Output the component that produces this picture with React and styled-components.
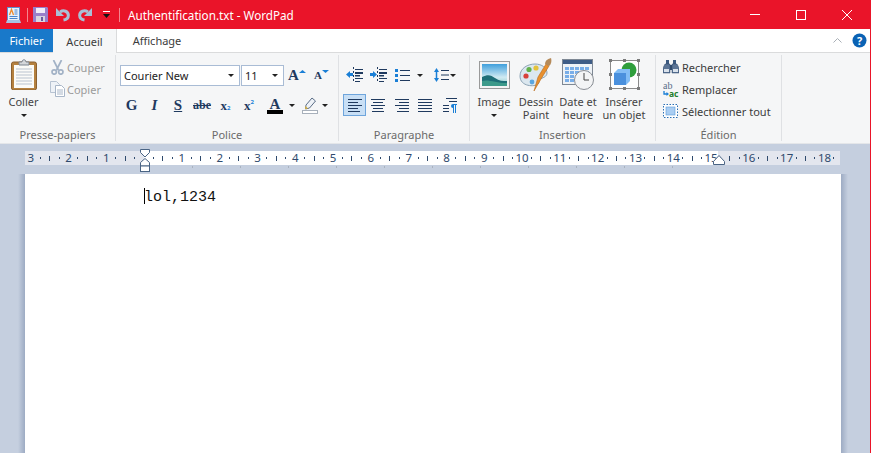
import styled, { createGlobalStyle } from "styled-components";

const Global = createGlobalStyle`
  html, body { margin: 0; padding: 0; height: 100%; overflow: hidden; }
  body { font-family: "Noto Sans", "Open Sans", sans-serif; font-size: 11px; color: #3c3c3c; }
  #root { height: 100%; }
`;

const Window = styled.div`
  width: 871px;
  height: 453px;
  box-sizing: border-box;
  border-right: 1px solid #ea1429;
  display: flex;
  flex-direction: column;
  overflow: hidden;
  background: #c5cfdf;
`;

const TitleBar = styled.div`
  height: 29px;
  flex: none;
  background: #ea1429;
  display: flex;
  align-items: center;
  color: #fff;
`;

const QuickBtn = styled.div`
  width: ${(p) => p.$w}px;
  height: 29px;
  display: flex;
  align-items: center;
  justify-content: center;
  flex: none;
`;

const TitleSep = styled.div`
  width: 1px;
  height: 14px;
  background: #f4848f;
  flex: none;
`;

const TitleText = styled.div`
  margin-left: 8px;
  font-size: 11.7px;
  flex: 1;
`;

const WinBtn = styled.div`
  width: 46px;
  height: 29px;
  display: flex;
  align-items: center;
  justify-content: center;
`;

const TabRow = styled.div`
  height: 24px;
  flex: none;
  background: #fff;
  display: flex;
  align-items: stretch;
  box-sizing: border-box;
  border-bottom: 1px solid #dadbdc;
  padding-right: 3px;
`;

const FileTab = styled.div`
  width: 53px;
  background: #1979ca;
  color: #fff;
  display: flex;
  align-items: center;
  justify-content: center;
`;

const Tab = styled.div`
  width: ${(p) => p.$w}px;
  display: flex;
  align-items: center;
  justify-content: center;
  color: #3c3c3c;
  box-sizing: border-box;
  height: ${(p) => (p.$active ? "24px" : "23px")};
  background: ${(p) => (p.$active ? "#f5f6f7" : "#fff")};
  border-right: ${(p) => (p.$active ? "1px solid #dadbdc" : "none")};
`;

const TabFill = styled.div`
  flex: 1;
`;

const TabIcon = styled.div`
  display: flex;
  align-items: center;
  margin-left: ${(p) => p.$ml || 0}px;
`;

const Ribbon = styled.div`
  height: 91px;
  flex: none;
  background: #f5f6f7;
  display: flex;
  box-sizing: border-box;
  padding-top: 2px;
  border-bottom: 1px solid #e4e6e9;
`;

const Group = styled.div`
  width: ${(p) => p.$w}px;
  height: 86px;
  box-sizing: border-box;
  border-right: 1px solid #dfe1e4;
  display: flex;
  flex-direction: column;
  flex: none;
`;

const GroupBody = styled.div`
  flex: 1;
  display: flex;
  padding-left: ${(p) => p.$pl || 0}px;
  padding-top: ${(p) => p.$pt || 0}px;
  min-height: 0;
`;

const GroupBodyCol = styled(GroupBody)`
  flex-direction: column;
`;

const GroupLabel = styled.div`
  height: 12px;
  line-height: 12px;
  text-align: center;
  color: #6a6a6a;
  flex: none;
`;

const LargeBtn = styled.div`
  width: ${(p) => p.$w}px;
  display: flex;
  flex-direction: column;
  align-items: center;
  flex: none;
  padding-top: 1px;
`;

const LargeIcon = styled.div`
  height: 35px;
  display: flex;
  align-items: center;
  justify-content: center;
  margin-bottom: 3px;
`;

const LargeLabel = styled.div`
  line-height: 13px;
  text-align: center;
  white-space: nowrap;
  color: #444;
`;

const SmallCol = styled.div`
  display: flex;
  flex-direction: column;
`;

const SmallBtn = styled.div`
  height: 22px;
  display: flex;
  align-items: center;
  white-space: nowrap;
  color: ${(p) => (p.$disabled ? "#9b9b9b" : "#3c3c3c")};
`;

const SmallIcon = styled.div`
  width: ${(p) => p.$w || 19}px;
  display: flex;
  align-items: center;
  justify-content: ${(p) => p.$justify || "center"};
  flex: none;
`;

const Arrow = styled.div`
  width: 0;
  height: 0;
  border-left: 3px solid transparent;
  border-right: 3px solid transparent;
  border-top: 3px solid #222;
  margin: ${(p) => p.$m || "0"};
  flex: none;
`;

const ToolRow = styled.div`
  display: flex;
  align-items: center;
  height: 22px;
  margin-bottom: ${(p) => p.$mb || 0}px;
`;

const Combo = styled.div`
  width: ${(p) => p.$w}px;
  height: 21px;
  box-sizing: border-box;
  margin-right: ${(p) => p.$mr || 0}px;
  background: #fff;
  border: 1px solid #a9bcd5;
  display: flex;
  align-items: center;
  justify-content: space-between;
  padding: 0 5px 0 3px;
  color: #222;
  flex: none;
`;

const ToolBtn = styled.div`
  width: ${(p) => p.$w || 23}px;
  height: 22px;
  box-sizing: border-box;
  display: flex;
  align-items: center;
  justify-content: center;
  flex: none;
  background: ${(p) => (p.$on ? "#c8dff5" : "transparent")};
  border: 1px solid ${(p) => (p.$on ? "#6ea5dc" : "transparent")};
`;

const Glyph = styled.span`
  font-family: "Liberation Serif", serif;
  font-weight: bold;
  font-style: ${(p) => (p.$italic ? "italic" : "normal")};
  font-size: ${(p) => p.$size || 14}px;
  color: #1f3a5f;
  line-height: 1;
  text-decoration: ${(p) => p.$deco || "none"};
`;

const Tiny = styled.span`
  font-family: "Noto Sans", sans-serif;
  font-size: 6px;
  font-weight: bold;
  color: #1a7fd6;
  position: relative;
  top: ${(p) => p.$top}px;
`;

const Workspace = styled.div`
  flex: 1;
  display: flex;
  flex-direction: column;
  padding-top: 7px;
  min-height: 0;
`;

const Ruler = styled.div`
  position: relative;
  width: 815px;
  height: 14px;
  margin-left: 25px;
  margin-bottom: 9px;
  flex: none;
  display: flex;
  box-sizing: border-box;
  padding-left: 1px;
  background: linear-gradient(to right, #e3e6ee 119px, #fff 119px, #fff 693px, #e3e6ee 693px);
`;

const RulerCell = styled.div`
  width: 37.8px;
  flex: none;
  display: flex;
  align-items: center;
`;

const RulerSlot = styled.div`
  width: 9.45px;
  flex: none;
  display: flex;
  align-items: center;
  justify-content: center;
  font-size: 11.5px;
  color: #2f4a6d;
  line-height: 14px;
`;

const RulerDot = styled.i`
  display: block;
  width: 1px;
  height: ${(p) => p.$h}px;
  background: #2f4a6d;
`;

const TabStops = styled.div`
  position: absolute;
  left: 167px;
  top: 15px;
  width: 481px;
  height: 2px;
  background: repeating-linear-gradient(to right, #a9b2bf 0, #a9b2bf 1px, transparent 1px, transparent 48px);
`;

const IndentMark = styled.svg`
  position: absolute;
  left: ${(p) => p.$left}px;
  top: ${(p) => p.$top}px;
`;

const PageShadow = styled.div`
  flex: 1;
  width: 830px;
  margin-left: 18px;
  box-sizing: border-box;
  padding: 0 7px;
  display: flex;
  background: linear-gradient(to right, #c5cfdf 0, #9dabc3 7px, #9dabc3 823px, #c5cfdf 830px);
`;

const Page = styled.div`
  flex: 1;
  background: #fff;
  padding: 14px 0 0 119px;
  display: flex;
  align-items: flex-start;
  font-family: "Liberation Mono", "Courier New", monospace;
  font-size: 15px;
  color: #111;
  line-height: 17px;
`;

const Caret = styled.span`
  display: inline-block;
  width: 1px;
  height: 16px;
  margin-right: -1px;
  background: #000;
`;

const PageText = styled.span`
  padding-top: 1px;
`;

const WordPadIcon = () => (
  <svg width="15" height="16" viewBox="0 0 15 16">
    <rect x="1.500" y="0.500" width="12" height="13" fill="#e8f1fb" stroke="#5f8fd0" />
    <path d="M3.500 8L5.500 2.500 7.500 8" stroke="#ee8a2c" strokeWidth="1.300" fill="none" />
    <path d="M8.500 3h3M8.500 5h3M8.500 7h3M3.500 9.500h8M3.500 11.500h8" stroke="#4a85cc" />
    <path d="M1 13h13l1 3H0z" fill="#a7c3e4" />
  </svg>
);

const SaveIcon = () => (
  <svg width="15" height="15" viewBox="0 0 15 15">
    <path d="M0 0h14l1 1v14H0z" fill="#9a7fca" />
    <rect x="3" y="1" width="9" height="5" fill="#f1ecf9" />
    <rect x="3" y="9" width="9" height="6" fill="#d8d6e0" />
    <rect x="8" y="10" width="2" height="4" fill="#6a5a9e" />
  </svg>
);

const UndoIcon = ({ flip }) => (
  <svg width="14" height="15" viewBox="0 0 14 15" style={flip ? { transform: "scaleX(-1)" } : undefined}>
    <path d="M4 5C8 2.500 12 4.500 12.300 8 12.500 10.500 10.500 12.500 7.500 13" stroke="#a9bfd6" strokeWidth="3" fill="none" />
    <path d="M0 1v8h8z" fill="#a9bfd6" />
  </svg>
);

const QuickMore = () => (
  <svg width="8" height="8" viewBox="0 0 8 8">
    <path d="M0 0h7v1H0z" fill="#fff" />
    <path d="M0 3h7L3.500 7z" fill="#111" />
  </svg>
);

const ClipboardIcon = () => (
  <svg width="26" height="31" viewBox="0 0 26 31">
    <rect x="0.500" y="3" width="25" height="28" rx="2" fill="#b5813f" stroke="#8a6030" />
    <rect x="3" y="6" width="20" height="23" fill="#fbfbf8" />
    <path d="M5 10h16M5 13h16M5 16h16M5 19h16M5 22h16M5 25h16" stroke="#b9c3cf" />
    <path d="M8 6V3h3c0-3 4-3 4 0h3v3z" fill="#d4d7da" stroke="#7d8590" />
  </svg>
);

const ScissorsIcon = () => (
  <svg width="13" height="15" viewBox="0 0 13 15" fill="none" stroke="#a2b2c6" strokeWidth="1.700">
    <path d="M2.500 0l5 10M10.500 0l-5 10" />
    <circle cx="3.200" cy="12" r="2.200" />
    <circle cx="9.800" cy="12" r="2.200" />
  </svg>
);

const CopyIcon = () => (
  <svg width="15" height="16" viewBox="0 0 15 16">
    <path d="M.5.5h6l3 3v8h-9z" fill="#eef2f7" stroke="#b7c3d2" />
    <path d="M5.500 4.500h6l3 3v8h-9z" fill="#fff" stroke="#a8b6c8" />
    <path d="M7 9h6M7 11h6M7 13h6" stroke="#a8b6c8" />
  </svg>
);

const BlueLetter = ({ up }) => (
  <svg width="7" height="10" viewBox="0 0 7 10">
    <path d={up ? "M0 3L3.500 0 7 3z" : "M0 0h7L3.500 3z"} fill="#1a7fd6" />
  </svg>
);

const LineSet = ({ rows, width = 16 }) => (
  <svg width={width} height="13" viewBox={`0 0 ${width} 13`}>
    {rows.map(([x, w], i) => (
      <rect key={i} x={x} y={i * 3} width={w} height="1" fill="#1f3a5f" />
    ))}
  </svg>
);

const IndentIcon = ({ left }) => (
  <svg width="17" height="16" viewBox="0 0 17 16">
    <path d="M7.500 0v16" stroke="#1f3a5f" strokeDasharray="2 2" />
    <path d="M9 2.500h8M9 11.500h8M9 14.500h5" stroke="#1f3a5f" />
    <path d="M9 5h8v2H9zM9 8h5v1.500H9z" fill="#1f3a5f" />
    {left ? (
      <path d="M0 7.500L4 4v2h3v3H4v2z" fill="#1a7fd6" />
    ) : (
      <path d="M7 7.500L3 4v2H0v3h3v2z" fill="#1a7fd6" />
    )}
  </svg>
);

const ListIcon = () => (
  <svg width="15" height="13" viewBox="0 0 15 13">
    <path d="M5 1.500h10M5 6.500h10M5 11.500h10" stroke="#1f3a5f" />
    <path d="M0 0h3v3H0zM0 5h3v3H0zM0 10h3v3H0z" fill="#1a7fd6" />
  </svg>
);

const SpacingIcon = () => (
  <svg width="15" height="16" viewBox="0 0 15 16">
    <path d="M7 3.500h8M7 8h8M7 12.500h8" stroke="#1f3a5f" />
    <path d="M2.500 3v10" stroke="#1a7fd6" strokeWidth="1.500" />
    <path d="M0 5L2.500 1 5 5zM0 11l2.500 4L5 11z" fill="#1a7fd6" />
  </svg>
);

const ParaIcon = () => (
  <svg width="14" height="15" viewBox="0 0 14 15">
    <path d="M3 .5h11M6 3.500h8M0 7.500h6M0 10.500h6M0 13.500h6" stroke="#1f3a5f" />
    <path d="M8 6h6v1h-1v8h-1V7h-1v8h-1v-5a2 2 0 0 1 0-4z" fill="#1a7fd6" />
  </svg>
);

const HighlightIcon = () => (
  <svg width="16" height="17" viewBox="0 0 16 17">
    <path d="M4 8l6-7 3.500 3-6 7-4 1z" fill="#eef2f7" stroke="#5a6d86" />
    <path d="M3.500 9l2.500 2.500-3 .5z" fill="#d9b23c" />
    <rect x="0.500" y="13.500" width="15" height="3" fill="#fff" stroke="#a7b0bb" />
  </svg>
);

const ImageIcon = () => (
  <svg width="31" height="28" viewBox="0 0 31 28">
    <defs>
      <linearGradient id="sky" x1="0" y1="0" x2="0" y2="1">
        <stop offset="0" stopColor="#3f9fdc" />
        <stop offset="0.600" stopColor="#cfeaf2" />
        <stop offset="1" stopColor="#8fc9c4" />
      </linearGradient>
    </defs>
    <rect x="0.500" y="0.500" width="30" height="27" fill="#f4f4f4" stroke="#9a9a9a" />
    <rect x="3" y="3" width="25" height="22" fill="url(#sky)" />
    <path d="M3 16c6-3 9-2 13 1s8 3 12 3v5H3z" fill="#1f6f78" />
    <path d="M3 20c6-2 14 2 25 2v3H3z" fill="#3d9a8a" />
  </svg>
);

const PaletteIcon = () => (
  <svg width="34" height="34" viewBox="0 0 34 34">
    <path d="M1 18C1 10 9 6 16 6c7 0 12 4 12 9 0 4-5 5-7 6-2 1 0 3-2 5-3 3-18 3-18-8z" fill="#dbe7ef" stroke="#8ba2b4" />
    <circle cx="7" cy="18" r="2.600" fill="#d8413a" />
    <circle cx="10" cy="11.500" r="2.600" fill="#62b14a" />
    <circle cx="17" cy="10" r="2.600" fill="#e5c23a" />
    <circle cx="13" cy="24" r="2.400" fill="#5aa6e0" />
    <path d="M15 33l4-14 8-13 3 2-8 13z" fill="#e8902f" stroke="#b96a1a" strokeWidth="0.600" />
    <path d="M26 6c0-3 2-5 6-6 1 3 0 7-2 8z" fill="#b58a5a" />
  </svg>
);

const CalendarIcon = () => {
  const cells = [];
  for (let r = 0; r < 4; r++) {
    for (let c = 0; c < 5; c++) {
      cells.push(<rect key={`${r}-${c}`} x={3 + c * 5} y={8 + r * 4} width="4" height="3" fill="#79aee8" />);
    }
  }
  return (
    <svg width="32" height="31" viewBox="0 0 32 31">
      <rect x="0.500" y="0.500" width="30" height="25" fill="#eef2f6" stroke="#7e8894" />
      <rect x="1" y="1" width="29" height="4" fill="#3e5c86" />
      {cells}
      <circle cx="22" cy="21" r="9.500" fill="#f3f4f5" stroke="#8b8f95" />
      <path d="M22 14v7h5" stroke="#444" fill="none" />
    </svg>
  );
};

const ObjectIcon = () => (
  <svg width="31" height="31" viewBox="0 0 31 31">
    <rect x="1.500" y="1.500" width="28" height="28" fill="#fdfdfd" stroke="#8a8a8a" />
    <path d="M0 0h3v3H0zM14 0h3v3h-3zM28 0h3v3h-3zM0 14h3v3H0zM28 14h3v3h-3zM0 28h3v3H0zM14 28h3v3h-3zM28 28h3v3h-3z" fill="#7a7a7a" />
    <circle cx="20" cy="11" r="7.500" fill="#2f9e3c" />
    <path d="M5 14l4-4h12v12l-4 4H5z" fill="#82bdf5" />
    <path d="M5 14h12v12H5z" fill="#4a90dd" />
  </svg>
);

const BinocularsIcon = () => (
  <svg width="16" height="14" viewBox="0 0 16 14">
    <path d="M3 0h3v4H3zM10 0h3v4h-3z" fill="#3c5a80" />
    <path d="M2 4h5v9H0V8zM9 4h5l2 4v5H9z" fill="#5c7596" stroke="#2f4a6d" strokeWidth="0.500" />
    <path d="M7 5h2v5H7z" fill="#2f4a6d" />
    <path d="M1 9h5v3H1zM10 9h5v3h-5z" fill="#d9e2ec" />
  </svg>
);

const ReplaceIcon = () => (
  <svg width="17" height="17" viewBox="0 0 17 17">
    <text x="0" y="8" fontFamily="Liberation Serif" fontSize="10" fill="#5a6f88">ab</text>
    <text x="6" y="16" fontFamily="Noto Sans" fontWeight="bold" fontSize="8.500" fill="#1e7f2c">ac</text>
    <path d="M1 10v3h3" stroke="#1a7fd6" strokeWidth="1.300" fill="none" />
    <path d="M3.500 11l2.500 2-2.500 2z" fill="#1a7fd6" />
  </svg>
);

const SelectAllIcon = () => (
  <svg width="15" height="14" viewBox="0 0 15 14">
    <rect x="0.500" y="0.500" width="14" height="13" fill="#fff" stroke="#2a6fb5" strokeDasharray="1.500 1.500" />
    <rect x="3" y="3" width="9" height="8" fill="#a9cdf2" stroke="#5d9ad8" strokeWidth="0.600" />
  </svg>
);

const rulerLabels = ["3", "2", "1", "", ...Array.from({ length: 18 }, (_, i) => String(i + 1))];

export default function App() {
  return (
    <Window>
      <Global />
      <TitleBar>
        <QuickBtn $w={27}><WordPadIcon /></QuickBtn>
        <TitleSep />
        <QuickBtn $w={24}><SaveIcon /></QuickBtn>
        <QuickBtn $w={22}><UndoIcon /></QuickBtn>
        <QuickBtn $w={21}><UndoIcon flip /></QuickBtn>
        <QuickBtn $w={24}><QuickMore /></QuickBtn>
        <TitleSep />
        <TitleText>Authentification.txt - WordPad</TitleText>
        <WinBtn>
          <svg width="10" height="1"><rect width="10" height="1" fill="#fff" /></svg>
        </WinBtn>
        <WinBtn>
          <svg width="10" height="10"><rect x="0.500" y="0.500" width="9" height="9" fill="none" stroke="#fff" /></svg>
        </WinBtn>
        <WinBtn>
          <svg width="10" height="10"><path d="M0 0l10 10M10 0L0 10" stroke="#fff" /></svg>
        </WinBtn>
      </TitleBar>

      <TabRow>
        <FileTab>Fichier</FileTab>
        <Tab $w={64} $active>Accueil</Tab>
        <Tab $w={80}>Affichage</Tab>
        <TabFill />
        <TabIcon>
          <svg width="9" height="5" viewBox="0 0 9 5"><path d="M.5 4.500l4-4 4 4" stroke="#a9afb6" fill="none" /></svg>
        </TabIcon>
        <TabIcon $ml={10}>
          <svg width="15" height="15" viewBox="0 0 15 15">
            <circle cx="7.500" cy="7.500" r="7" fill="#0a62b4" />
            <text x="7.500" y="11.500" textAnchor="middle" fontFamily="Noto Sans" fontWeight="bold" fontSize="11" fill="#fff">?</text>
          </svg>
        </TabIcon>
      </TabRow>

      <Ribbon>
        <Group $w={116}>
          <GroupBody $pl={0} $pt={1}>
            <LargeBtn $w={47}>
              <LargeIcon><ClipboardIcon /></LargeIcon>
              <LargeLabel>Coller</LargeLabel>
              <Arrow $m="6px 0 0" />
            </LargeBtn>
            <SmallCol>
              <SmallBtn $disabled><SmallIcon $w={20}><ScissorsIcon /></SmallIcon>Couper</SmallBtn>
              <SmallBtn $disabled><SmallIcon $w={20}><CopyIcon /></SmallIcon>Copier</SmallBtn>
            </SmallCol>
          </GroupBody>
          <GroupLabel>Presse-papiers</GroupLabel>
        </Group>

        <Group $w={223}>
          <GroupBodyCol $pl={4} $pt={9}>
            <ToolRow $mb={8}>
              <Combo $w={120} $mr={1}>Courier New<Arrow /></Combo>
              <Combo $w={43}>11<Arrow /></Combo>
              <ToolBtn $w={26}>
                <Glyph $size={15}>A</Glyph>
                <BlueLetter up />
              </ToolBtn>
              <ToolBtn $w={23}>
                <Glyph $size={11}>A</Glyph>
                <BlueLetter />
              </ToolBtn>
            </ToolRow>
            <ToolRow>
              <ToolBtn><Glyph $size={15}>G</Glyph></ToolBtn>
              <ToolBtn><Glyph $size={15} $italic>I</Glyph></ToolBtn>
              <ToolBtn $w={24}><Glyph $size={15} $deco="underline">S</Glyph></ToolBtn>
              <ToolBtn $w={24}><Glyph $size={12} $deco="line-through">abe</Glyph></ToolBtn>
              <ToolBtn><Glyph $size={13}>x</Glyph><Tiny $top={3}>2</Tiny></ToolBtn>
              <ToolBtn $w={24}><Glyph $size={13}>x</Glyph><Tiny $top={-3}>2</Tiny></ToolBtn>
              <ToolBtn $w={28}>
                <svg width="16" height="17" viewBox="0 0 16 17">
                  <text x="8" y="12" textAnchor="middle" fontFamily="Liberation Serif" fontWeight="bold" fontSize="15" fill="#1f3a5f">A</text>
                  <rect y="13" width="16" height="4" fill="#000" />
                </svg>
              </ToolBtn>
              <Arrow $m="0 5px 0 0" />
              <ToolBtn $w={20}><HighlightIcon /></ToolBtn>
              <Arrow $m="0 0 0 2px" />
            </ToolRow>
          </GroupBodyCol>
          <GroupLabel>Police</GroupLabel>
        </Group>

        <Group $w={131}>
          <GroupBodyCol $pl={4} $pt={9}>
            <ToolRow $mb={8}>
              <ToolBtn><IndentIcon left /></ToolBtn>
              <ToolBtn $w={24}><IndentIcon /></ToolBtn>
              <ToolBtn $w={24}><ListIcon /></ToolBtn>
              <Arrow $m="0 9px 0 3px" />
              <ToolBtn $w={18}><SpacingIcon /></ToolBtn>
              <Arrow />
            </ToolRow>
            <ToolRow>
              <ToolBtn $on><LineSet rows={[[1, 14], [1, 10], [1, 14], [1, 10], [1, 12]]} /></ToolBtn>
              <ToolBtn $w={24}><LineSet rows={[[1, 14], [3, 10], [1, 14], [3, 10], [2, 12]]} /></ToolBtn>
              <ToolBtn $w={23}><LineSet rows={[[1, 14], [5, 10], [1, 14], [5, 10], [3, 12]]} /></ToolBtn>
              <ToolBtn $w={24}><LineSet rows={[[1, 14], [1, 14], [1, 14], [1, 14], [1, 14]]} /></ToolBtn>
              <ToolBtn $w={25}><ParaIcon /></ToolBtn>
            </ToolRow>
          </GroupBodyCol>
          <GroupLabel>Paragraphe</GroupLabel>
        </Group>

        <Group $w={186}>
          <GroupBody $pl={2} $pt={1}>
            <LargeBtn $w={44}>
              <LargeIcon><ImageIcon /></LargeIcon>
              <LargeLabel>Image</LargeLabel>
              <Arrow $m="6px 0 0" />
            </LargeBtn>
            <LargeBtn $w={40}>
              <LargeIcon><PaletteIcon /></LargeIcon>
              <LargeLabel>Dessin<br />Paint</LargeLabel>
            </LargeBtn>
            <LargeBtn $w={44}>
              <LargeIcon><CalendarIcon /></LargeIcon>
              <LargeLabel>Date et<br />heure</LargeLabel>
            </LargeBtn>
            <LargeBtn $w={48}>
              <LargeIcon><ObjectIcon /></LargeIcon>
              <LargeLabel>Insérer<br />un objet</LargeLabel>
            </LargeBtn>
          </GroupBody>
          <GroupLabel>Insertion</GroupLabel>
        </Group>

        <Group $w={126}>
          <GroupBodyCol $pl={7} $pt={1}>
            <SmallBtn><SmallIcon $justify="flex-start"><BinocularsIcon /></SmallIcon>Rechercher</SmallBtn>
            <SmallBtn><SmallIcon $justify="flex-start"><ReplaceIcon /></SmallIcon>Remplacer</SmallBtn>
            <SmallBtn><SmallIcon $justify="flex-start"><SelectAllIcon /></SmallIcon>Sélectionner tout</SmallBtn>
          </GroupBodyCol>
          <GroupLabel>Édition</GroupLabel>
        </Group>
      </Ribbon>

      <Workspace>
        <Ruler>
          {rulerLabels.map((label, i) => (
            <RulerCell key={i}>
              <RulerSlot>{label}</RulerSlot>
              <RulerSlot><RulerDot $h={2} /></RulerSlot>
              {i < rulerLabels.length - 1 && <RulerSlot><RulerDot $h={5} /></RulerSlot>}
              {i < rulerLabels.length - 1 && <RulerSlot><RulerDot $h={2} /></RulerSlot>}
            </RulerCell>
          ))}
          <TabStops />
          <IndentMark $left={115} $top={-2} width="11" height="23" viewBox="0 0 11 23">
            <path d="M.5.5h9v3l-4.500 4.500-4.500-4.500z" fill="#fff" stroke="#4a6484" />
            <path d="M5 9.500l4.500 4v3.500H.5v-3.500z" fill="#fff" stroke="#4a6484" />
            <rect x="0.500" y="17" width="9" height="5.500" fill="#fff" stroke="#4a6484" />
          </IndentMark>
          <IndentMark $left={688} $top={4} width="12" height="10" viewBox="0 0 12 10">
            <path d="M.5 9.500V6.500l5.500-6 5.500 6v3z" fill="#fff" stroke="#4a6484" />
          </IndentMark>
        </Ruler>
        <PageShadow>
          <Page>
            <Caret />
            <PageText>lol,1234</PageText>
          </Page>
        </PageShadow>
      </Workspace>
    </Window>
  );
}
